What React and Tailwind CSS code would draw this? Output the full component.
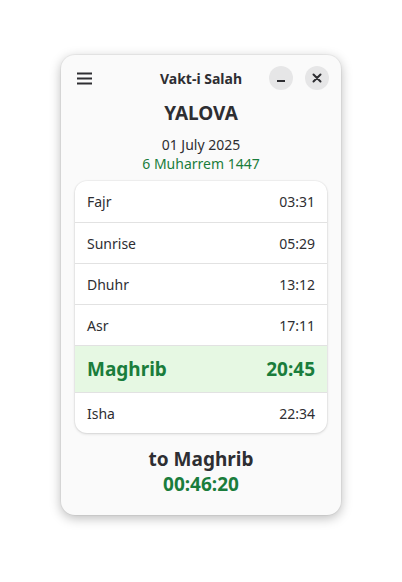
const prayers = [
  { name: "Fajr", time: "03:31" },
  { name: "Sunrise", time: "05:29" },
  { name: "Dhuhr", time: "13:12" },
  { name: "Asr", time: "17:11" },
  { name: "Maghrib", time: "20:45", active: true },
  { name: "Isha", time: "22:34" },
]

function App() {
  return (
    <div
      className="w-[402px] h-[582px] bg-white flex justify-center pt-[55px]"
      style={{ fontFamily: "'Noto Sans', 'Open Sans', sans-serif" }}
    >
      <div className="w-[280px] h-[460px] bg-[#fafafa] rounded-[14px] shadow-[0_3px_12px_rgba(0,0,0,0.28),0_0_0_1px_rgba(0,0,0,0.04)] flex flex-col text-[#2e2e32]">
        {/* header bar */}
        <div className="h-[46px] flex items-center px-[16px] relative">
          <svg width="15" height="13" viewBox="0 0 15 13">
            <path d="M0 1.5 H15 M0 6.5 H15 M0 11.5 H15" stroke="#2e2e32" strokeWidth="2" />
          </svg>
          <div className="absolute left-0 right-0 text-center text-[14px] font-bold pointer-events-none">
            Vakt-i Salah
          </div>
          <div className="ml-auto flex gap-[12px] mr-[-4px]">
            <button className="w-[24px] h-[24px] rounded-full bg-[#e6e6e7] flex items-center justify-center">
              <span className="block w-[8px] h-[2px] bg-[#2e2e32] mt-[5px]" />
            </button>
            <button className="w-[24px] h-[24px] rounded-full bg-[#e6e6e7] flex items-center justify-center">
              <svg width="10" height="10" viewBox="0 0 10 10">
                <path d="M1.5 1.5 L8.5 8.5 M8.5 1.5 L1.5 8.5" stroke="#2e2e32" strokeWidth="2" strokeLinecap="round" />
              </svg>
            </button>
          </div>
        </div>

        <div className="text-center text-[19px] font-bold leading-[24px]">YALOVA</div>
        <div className="text-center text-[14px] leading-[19px] mt-[10px]">01 July 2025</div>
        <div className="text-center text-[14px] leading-[19px] text-[#1a7d3c]">6 Muharrem 1447</div>

        <div className="mx-[14px] mt-[8px] bg-white rounded-[12px] shadow-[0_1px_3px_rgba(0,0,0,0.14),0_0_0_1px_rgba(0,0,0,0.03)] overflow-hidden">
          {prayers.map((p, i) => (
            <div
              key={p.name}
              className={
                p.active
                  ? "h-[47px] px-[12px] flex items-center justify-between bg-[#e6f8e3] text-[#1a7d3c] font-bold text-[19px] border-t border-[#e2e2e2]"
                  : i === 0
                  ? "h-[41px] px-[12px] flex items-center justify-between text-[14px]"
                  : "h-[41px] px-[12px] flex items-center justify-between text-[14px] border-t border-[#e2e2e2]"
              }
            >
              <span>{p.name}</span>
              <span>{p.time}</span>
            </div>
          ))}
        </div>

        <div className="text-center text-[19px] font-bold leading-[25px] mt-[14px]">to Maghrib</div>
        <div className="text-center text-[19px] font-bold leading-[25px] text-[#1a7d3c]">00:46:20</div>
      </div>
    </div>
  )
}

export default App
